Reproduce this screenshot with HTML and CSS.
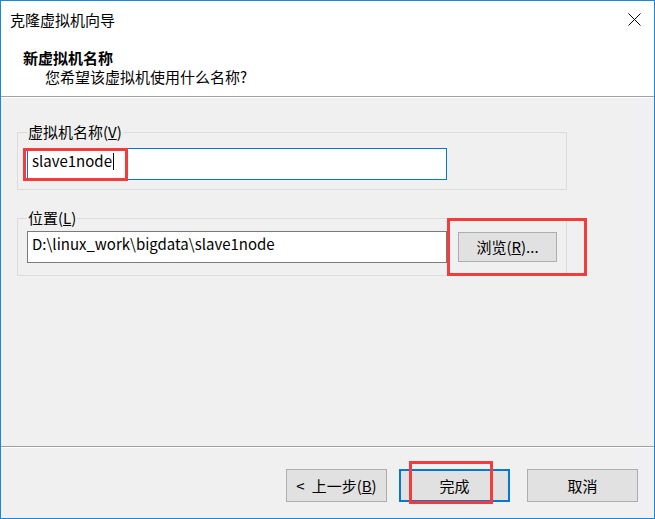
FILE: index.html
```html
<!DOCTYPE html>
<html lang="zh-CN">
<head>
<meta charset="utf-8">
<title>克隆虚拟机向导</title>
<link rel="stylesheet" href="styles.css">
</head>
<body>
<div class="window">
  <div class="header">
    <div class="titlebar">
      <span class="title">克隆虚拟机向导</span>
      <svg class="close" width="13" height="13" viewBox="0 0 13 13"><path d="M0.5 0.5 L12.5 12.5 M12.5 0.5 L0.5 12.5" stroke="#000" stroke-width="1" fill="none"/></svg>
    </div>
    <div class="head-title">新虚拟机名称</div>
    <div class="head-sub">您希望该虚拟机使用什么名称?</div>
  </div>
  <div class="body">
    <fieldset class="group group-name">
      <legend>虚拟机名称(<u>V</u>)</legend>
      <div class="textbox focused">slave1node<span class="caret"></span></div>
    </fieldset>
    <fieldset class="group group-loc">
      <legend>位置(<u>L</u>)</legend>
      <div class="row">
        <div class="textbox">D:\linux_work\bigdata\slave1node</div>
        <button class="btn btn-browse">浏览(<u>R</u>)...</button>
      </div>
    </fieldset>
  </div>
  <div class="footer">
    <button class="btn btn-back"><span class="lt">&lt;</span>上一步(<u>B</u>)</button>
    <button class="btn btn-finish">完成</button>
    <button class="btn btn-cancel">取消</button>
  </div>
  <div class="mark mark-name"></div>
  <div class="mark mark-browse"></div>
  <div class="mark mark-finish"></div>
</div>
</body>
</html>
```

FILE: styles.css
```css
* { box-sizing: border-box; }
html, body { margin: 0; padding: 0; }
body {
  font-family: "Noto Sans CJK SC", "Noto Sans", sans-serif;
  font-size: 15px;
  color: #000;
  background: #f0f0f0;
}
.window {
  position: relative;
  width: 655px;
  height: 519px;
  border: 1px solid #1a87dd;
  background: #f0f0f0;
  display: flex;
  flex-direction: column;
}
.header {
  height: 96px;
  background: #fff;
  border-bottom: 1px solid #a0a0a0;
  flex: none;
}
.titlebar {
  display: flex;
  justify-content: space-between;
  align-items: flex-start;
  padding: 9px 13px 0 9px;
  height: 29px;
  line-height: 20px;
}
.close { margin-top: 3px; display: block; }
.head-title {
  margin-top: 18px;
  padding-left: 22px;
  font-weight: bold;
  line-height: 19px;
}
.head-sub {
  padding-left: 44px;
  line-height: 19px;
}
.body {
  flex: 1;
  border-top: 1px solid #fff;
  padding: 24px 0 0 16px;
}
.group {
  width: 550px;
  margin: 0;
  border: 1px solid #dcdcdc;
  padding: 6px 9px 9px 9px;
}
.group legend {
  padding: 0 1px;
  line-height: 20px;
}
.group-loc {
  margin-top: 18px;
  padding-top: 3px;
  padding-bottom: 12px;
}
.textbox {
  width: 420px;
  height: 32px;
  border: 1px solid #7a7a7a;
  background: #fff;
  padding: 0 4px;
  line-height: 23px;
  white-space: nowrap;
}
.textbox.focused { border-color: #0078d7; }
.caret {
  display: inline-block;
  width: 1px;
  height: 17px;
  background: #000;
  vertical-align: -3px;
  margin-left: 1px;
}
.row {
  display: flex;
  align-items: center;
  gap: 11px;
}
.btn {
  font-family: inherit;
  font-size: 15px;
  color: #000;
  background: #e1e1e1;
  border: 1px solid #adadad;
  padding: 0;
  margin: 0;
  line-height: 20px;
  text-align: center;
}
.btn-browse { width: 99px; height: 30px; }
.footer {
  flex: none;
  height: 72px;
  border-top: 1px solid #a0a0a0;
  box-shadow: inset 0 1px 0 #fff;
  display: flex;
  justify-content: flex-end;
  align-items: flex-start;
  padding: 22px 16px 0 0;
}
.footer .btn { height: 33px; width: 111px; }
.footer .btn-back { width: 101px; margin-right: 12px; }
.lt { margin-right: 7px; }
.footer .btn-finish { border: 2px solid #0078d7; margin-right: 17px; }
.mark {
  position: absolute;
  border: 3px solid #f43c3c;
}
.mark-name { left: 22px; top: 147px; width: 105px; height: 33px; }
.mark-browse { left: 446px; top: 217px; width: 140px; height: 58px; }
.mark-finish { left: 408px; top: 460px; width: 84px; height: 43px; }
```
